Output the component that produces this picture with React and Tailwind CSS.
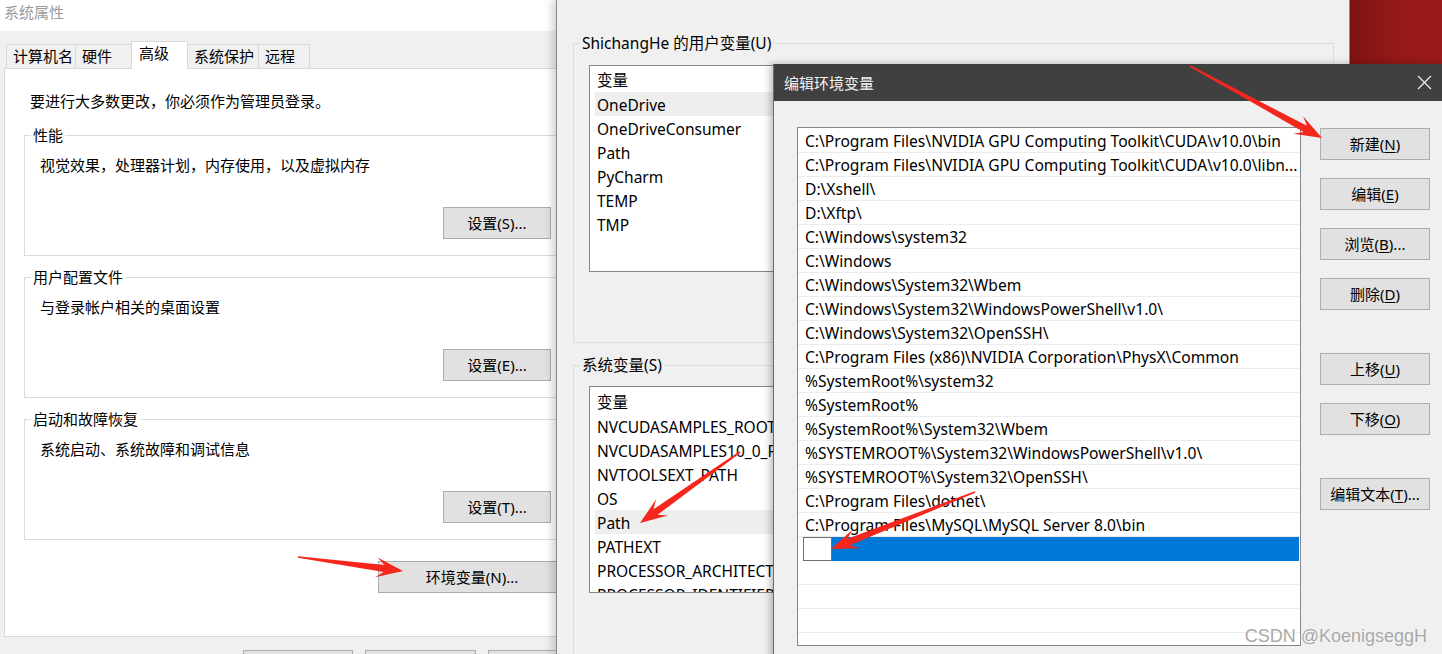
import React from "react";

const userVars = ["OneDrive", "OneDriveConsumer", "Path", "PyCharm", "TEMP", "TMP"];
const sysVars = [
  "NVCUDASAMPLES_ROOT",
  "NVCUDASAMPLES10_0_ROOT",
  "NVTOOLSEXT_PATH",
  "OS",
  "Path",
  "PATHEXT",
  "PROCESSOR_ARCHITECTURE",
  "PROCESSOR_IDENTIFIER",
];
const paths = [
  "C:\\Program Files\\NVIDIA GPU Computing Toolkit\\CUDA\\v10.0\\bin",
  "C:\\Program Files\\NVIDIA GPU Computing Toolkit\\CUDA\\v10.0\\libn...",
  "D:\\Xshell\\",
  "D:\\Xftp\\",
  "C:\\Windows\\system32",
  "C:\\Windows",
  "C:\\Windows\\System32\\Wbem",
  "C:\\Windows\\System32\\WindowsPowerShell\\v1.0\\",
  "C:\\Windows\\System32\\OpenSSH\\",
  "C:\\Program Files (x86)\\NVIDIA Corporation\\PhysX\\Common",
  "%SystemRoot%\\system32",
  "%SystemRoot%",
  "%SystemRoot%\\System32\\Wbem",
  "%SYSTEMROOT%\\System32\\WindowsPowerShell\\v1.0\\",
  "%SYSTEMROOT%\\System32\\OpenSSH\\",
  "C:\\Program Files\\dotnet\\",
  "C:\\Program Files\\MySQL\\MySQL Server 8.0\\bin",
];

// tapered red arrow like the snipping tool draws
function arrow(x1, y1, x2, y2) {
  const dx = x2 - x1;
  const dy = y2 - y1;
  const len = Math.hypot(dx, dy);
  const ux = dx / len;
  const uy = dy / len;
  const nx = -uy;
  const ny = ux;
  const p = (bx, by, back, side) => `${bx - ux * back + nx * side},${by - uy * back + ny * side}`;
  return [
    p(x1, y1, 0, 0.8),
    p(x2, y2, 19, 3.5),
    p(x2, y2, 27, 10),
    p(x2, y2, 0, 0),
    p(x2, y2, 27, -10),
    p(x2, y2, 19, -3.5),
    p(x1, y1, 0, -0.8),
  ].join(" ");
}

function Btn({ children, className = "" }) {
  return (
    <div
      className={`flex shrink-0 items-center justify-center whitespace-nowrap bg-[#e1e1e1] border border-[#adadad] h-[32px] leading-[20px] ${className}`}
    >
      {children}
    </div>
  );
}

function Group({ title, desc, button, className = "" }) {
  return (
    <fieldset className={`border border-[#dcdcdc] w-[536px] pb-[16px] ${className}`}>
      <legend className="ml-[6px] px-[2px] leading-[20px]">{title}</legend>
      <div className="pl-[15px] mt-[10px] leading-[20px]">{desc}</div>
      <Btn className="w-[108px] ml-auto mr-[8px] mt-[32px]">{button}</Btn>
    </fieldset>
  );
}

function Tab({ label, w, active }) {
  return active ? (
    <div className={`${w} shrink-0 whitespace-nowrap h-[28px] -mb-px -ml-px relative z-10 bg-white border border-b-0 border-[#d9d9d9] px-[7px] pt-[1px] leading-[20px]`}>
      {label}
    </div>
  ) : (
    <div className={`${w} shrink-0 whitespace-nowrap h-[24px] -ml-px bg-[#f0f0f0] border border-b-0 border-[#d9d9d9] px-[6px] pt-[1px] leading-[20px]`}>
      {label}
    </div>
  );
}

function U({ children }) {
  return <span className="underline underline-offset-2">{children}</span>;
}

export default function App() {
  return (
    <div className="relative w-[1442px] h-[654px] overflow-hidden bg-[#f0f0f0] text-[15px] text-black font-['Noto_Sans','Noto_Sans_CJK_SC',sans-serif]">
      {/* 系统属性 window */}
      <div className="absolute left-0 top-0 w-[580px] h-[654px] bg-[#f0f0f0]">
        <div className="h-[31px] bg-white pl-[4px] pt-[2px] leading-[20px] text-[#9a9a9a]">系统属性</div>
        <div className="flex items-end h-[37px] pl-[7px]">
          <Tab label="计算机名" w="w-[70px]" />
          <Tab label="硬件" w="w-[57px]" />
          <Tab label="高级" w="w-[57px]" active />
          <Tab label="系统保护" w="w-[72px]" />
          <Tab label="远程" w="w-[52px]" />
        </div>
        <div className="ml-[4px] h-[569px] bg-white border border-[#d9d9d9] pl-[19px]">
          <div className="mt-[22px] pl-[6px] leading-[20px]">要进行大多数更改，你必须作为管理员登录。</div>
          <Group className="mt-[14px]" title="性能" desc="视觉效果，处理器计划，内存使用，以及虚拟内存" button="设置(S)..." />
          <Group className="mt-[11px]" title="用户配置文件" desc="与登录帐户相关的桌面设置" button="设置(E)..." />
          <Group className="mt-[11px]" title="启动和故障恢复" desc="系统启动、系统故障和调试信息" button="设置(T)..." />
          <Btn className="w-[188px] ml-[354px] mt-[21px]">环境变量(N)...</Btn>
        </div>
        <div className="flex gap-[12px] ml-[243px] mt-[13px]">
          <Btn className="w-[110px]" />
          <Btn className="w-[111px]" />
          <Btn className="w-[111px]" />
        </div>
      </div>

      {/* 环境变量 window */}
      <div className="absolute left-[556px] top-0 w-[794px] h-[654px] bg-[#f0f0f0] border-l border-r border-[#8a8a8a] shadow-[-4px_0_8px_rgba(0,0,0,0.18)] text-[15.5px]">
        <fieldset className="ml-[16px] mt-[33px] w-[761px] h-[310px] border border-[#dcdcdc]">
          <legend className="ml-[6px] px-[2px] leading-[20px]">ShichangHe 的用户变量(U)</legend>
          <div className="ml-[15px] mt-[12px] w-[729px] h-[207px] bg-white border border-[#828790]">
            <div className="h-[26px] pt-[4px] pl-[7px] leading-[20px]">变量</div>
            {userVars.map((v, i) => (
              <div
                key={v}
                className={`ml-[5px] h-[24px] pl-[2px] pt-[3px] leading-[20px] ${i === 0 ? "bg-[#eeeeee]" : ""}`}
              >
                {v}
              </div>
            ))}
          </div>
        </fieldset>
        <fieldset className="ml-[16px] mt-[12px] w-[761px] h-[320px] border border-[#dcdcdc]">
          <legend className="ml-[6px] px-[2px] leading-[20px]">系统变量(S)</legend>
          <div className="ml-[15px] mt-[11px] w-[729px] h-[207px] bg-white border border-[#828790] overflow-hidden">
            <div className="h-[27px] pt-[5px] pl-[7px] leading-[20px]">变量</div>
            {sysVars.map((v) => (
              <div
                key={v}
                className={`ml-[5px] h-[24px] pl-[2px] pt-[3px] leading-[20px] whitespace-nowrap ${v === "Path" ? "bg-[#eeeeee]" : ""}`}
              >
                {v}
              </div>
            ))}
          </div>
        </fieldset>
      </div>

      {/* background window edge */}
      <div className="absolute left-[1350px] top-0 w-[92px] h-[64px] bg-gradient-to-r from-[#7e1313] via-[#961818] to-[#9a1a1a]" />

      {/* 编辑环境变量 dialog */}
      <div className="absolute left-[773px] top-[64px] w-[672px] h-[600px] bg-[#f0f0f0] border-l border-[#6b6b6b] shadow-[-3px_0_7px_rgba(0,0,0,0.25)]">
        <div className="flex items-center justify-between h-[37px] bg-[#404040] pl-[10px] pr-[12px] text-[#f2f2f2] leading-[20px]">
          <span>编辑环境变量</span>
          <svg width="15" height="15" viewBox="0 0 15 15" className="mr-[1px]">
            <path d="M1 1L14 14M14 1L1 14" stroke="#f2f2f2" strokeWidth="1.2" />
          </svg>
        </div>
        <div className="flex">
          <div className="ml-[23px] mt-[26px] w-[504px] h-[519px] bg-white border border-[#828790] pt-px text-[15.6px]">
            {paths.map((p) => (
              <div key={p} className="h-[24px] border-b border-[#ececec] pl-[7px] pt-[2px] leading-[20px] whitespace-nowrap">
                {p}
              </div>
            ))}
            <div className="flex h-[24px] pl-[5px] pr-px">
              <div className="w-[29px] h-[24px] bg-white border border-[#6f6f6f]" />
              <div className="flex-1 bg-[#0078d7]" />
            </div>
            {[0, 1, 2].map((i) => (
              <div key={i} className="h-[24px] border-b border-[#ececec]" />
            ))}
          </div>
          <div className="ml-[19px] mt-[27px] flex flex-col w-[110px]">
            <Btn>新建(<U>N</U>)</Btn>
            <Btn className="mt-[18px]">编辑(<U>E</U>)</Btn>
            <Btn className="mt-[18px]">浏览(<U>B</U>)...</Btn>
            <Btn className="mt-[18px]">删除(<U>D</U>)</Btn>
            <Btn className="mt-[43px]">上移(<U>U</U>)</Btn>
            <Btn className="mt-[18px]">下移(<U>O</U>)</Btn>
            <Btn className="mt-[43px]">编辑文本(<U>T</U>)...</Btn>
          </div>
        </div>
      </div>

      {/* annotation arrows */}
      <svg className="absolute inset-0 pointer-events-none" width="1442" height="654">
        <polygon points={arrow(1190, 66, 1322, 138)} fill="#f5271d" />
        <polygon points={arrow(975, 492, 831, 549)} fill="#f5271d" />
        <polygon points={arrow(740, 452, 640, 523)} fill="#f5271d" />
        <polygon points={arrow(298, 557, 403, 571)} fill="#f5271d" />
      </svg>

      <div className="absolute right-[15px] bottom-[7px] text-[18px] leading-[22px] text-[#a8a8a8] font-['Liberation_Sans',sans-serif] [text-shadow:0_0_2px_#ffffff]">
        CSDN @KoenigseggH
      </div>
    </div>
  );
}
